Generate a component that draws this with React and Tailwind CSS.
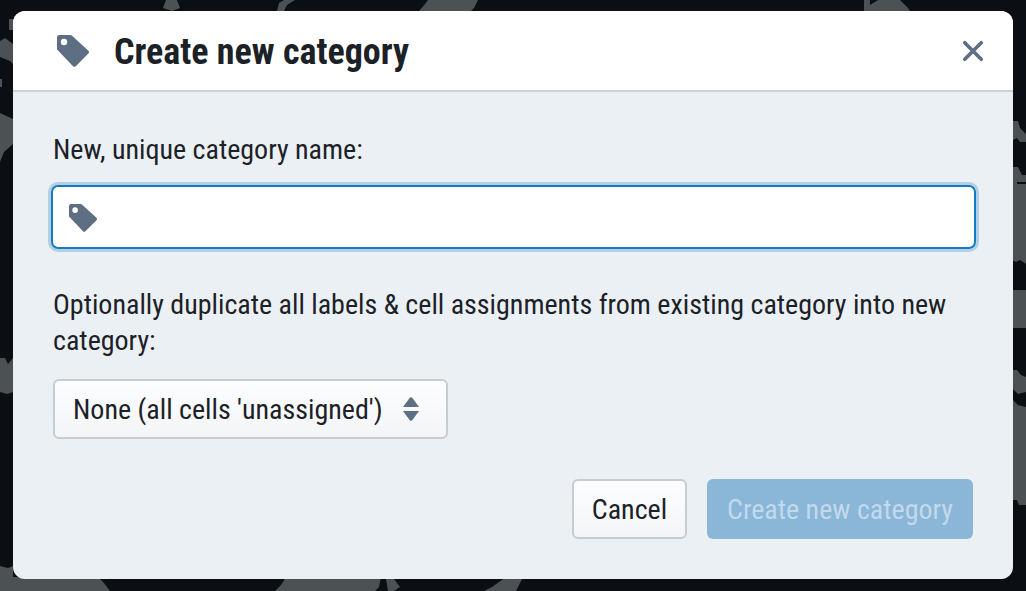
import React from 'react';

const TagIcon = ({ className }) => (
    <svg viewBox="0 0 16 16" className={className} fill="#5f6f83">
        <path fillRule="evenodd" d="M1.2 0H6.6c.3 0 .6.1.8.3l8.3 7.6c.4.4.4 1 0 1.4l-6.3 6.3c-.4.4-1 .4-1.4 0L.4 7.6C.1 7.4 0 7.1 0 6.8V1.2C0 .5.5 0 1.2 0zM3.5 1.9a1.6 1.6 0 1 0 0 3.2 1.6 1.6 0 0 0 0-3.2z" />
    </svg>
);

// the blurred map behind the dialog, only the edges show
const Backdrop = () => (
    <svg viewBox="0 0 1026 591" className="absolute inset-0 w-[1026px] h-[591px]" fill="#4c5154">
        <path d="M163 8l3-8h11l3 8-8 3zM277 11l2-8 5-3h11l-8 5-3 6zM419 11l6-7 3-4h50l-4 8-3 3zM864 11V0h6v5l8-5h22l8 8 2 3z" />
        <path d="M0 566l8 2 5-2v25H0zM13 577h85l6 6 6 8H0v-14zM275 591l6-6 5-8h95l-2 10-4 4zM386 579h8l6 8-6 4h-6zM484 591l8-4 14-10h17l-4 8-3 6z" />
        <path d="M9 19h4v11H9zM0 41l5-3 8 6v20l-3-3-10-4zM0 79h2v8H0zM0 113l13 6v25l-9 8-4 10zM0 358h5l3 6 5-6v34l-6 2-7-2z" />
        <path d="M1013 121h5l2 7 6 6v8h-6l-3-4-4 2zM1013 167h5l4 8h4v7h-9v2h9v80l-6-4-4 2-4-2zM1013 290h13v38h-13zM1013 370h4l4 5 5 2v15l-8 2-5-5zM1013 400l5 5 8 2v98h-7l-2-5h-4z" />
    </svg>
);

const App = () => {
    return (
        <div className="relative w-[1026px] h-[591px] overflow-hidden bg-[#0b0e12] font-['Roboto',sans-serif] [font-stretch:75%] text-[#1c2127]">
            <Backdrop />
            <div className="relative z-10 pt-[11px] pl-[13px]">
                <div className="w-[1000px] h-[568px] rounded-[12px] overflow-hidden bg-[#ebf0f4]">
                    <header className="flex items-center h-[81px] bg-white border-b-2 border-[#cfd1d3] pl-[44px] pr-[29px]">
                        <TagIcon className="w-[32px] h-[32px]" />
                        <h1 className="ml-[25px] pt-[2px] text-[36px] font-bold leading-none">Create new category</h1>
                        <svg viewBox="0 0 24 24" className="ml-auto w-[22px] h-[22px]" fill="none" stroke="#5f6f83" strokeWidth="4" strokeLinecap="round">
                            <path d="M3 3l18 18M21 3L3 21" />
                        </svg>
                    </header>
                    <div className="pl-[40px] pr-[38px] pt-[41px]">
                        <label className="block text-[28px] leading-[34px]">New, unique category name:</label>
                        <div className="mt-[15px] -ml-[5px] -mr-[4px] h-[70px] rounded-[10px] border-[3px] border-[#b3cfe6]">
                            <div className="flex items-center h-full pl-[16px] pt-[2px] bg-white rounded-[7px] border-2 border-[#137cbd]">
                                <TagIcon className="w-[28px] h-[28px]" />
                            </div>
                        </div>
                        <p className="mt-[35px] text-[28px] leading-[36px]">Optionally duplicate all labels &amp; cell assignments from existing category into new category:</p>
                        <button className="flex items-center mt-[20px] w-[395px] h-[60px] pl-[18px] bg-gradient-to-b from-[#fcfdfe] to-[#f3f5f7] rounded-[6px] border-2 border-[#c7ccd1] text-[28px]">
                            <span className="pt-[2px]">None (all cells 'unassigned')</span>
                            <svg viewBox="0 0 16 24" className="ml-[20px] w-[16px] h-[24px]" fill="#5f6f83">
                                <path d="M6.6 1a1.8 1.8 0 0 1 2.8 0L16 10H0zM0 14h16l-6.6 9a1.8 1.8 0 0 1-2.8 0z" />
                            </svg>
                        </button>
                        <div className="flex justify-end gap-[20px] mt-[40px] pr-[2px]">
                            <button className="w-[115px] h-[60px] pt-[2px] bg-gradient-to-b from-[#fcfdfe] to-[#f3f5f7] rounded-[6px] border-2 border-[#c7ccd1] text-[28px]">Cancel</button>
                            <button className="w-[266px] h-[60px] pt-[2px] bg-[#8ab6d8] rounded-[6px] text-[28px] text-[#c3d9ec]">Create new category</button>
                        </div>
                    </div>
                </div>
            </div>
        </div>
    );
};

export default App;
